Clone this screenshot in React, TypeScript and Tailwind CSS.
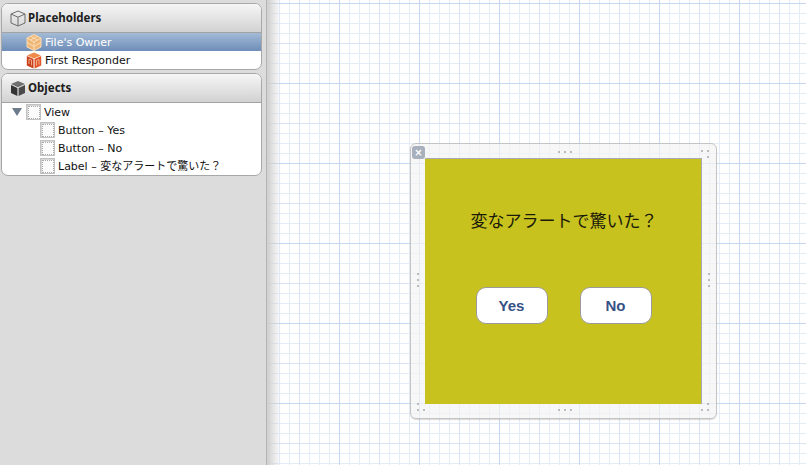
const uiFont = { fontFamily: '"DejaVu Sans", "Noto Sans CJK JP", sans-serif' };

// small cube in the panel headers
function HeaderCube({ filled }: { filled?: boolean }) {
  return (
    <svg width="16" height="17" viewBox="0 0 16 17" className="shrink-0">
      {filled ? (
        <>
          <path d="M8 1 L15 4 L8 7.2 L1 4 Z" fill="#6f6f6f" />
          <path d="M1 5 L7.4 8 V16 L1 13 Z" fill="#333" />
          <path d="M15 5 L8.6 8 V16 L15 13 Z" fill="#4a4a4a" />
        </>
      ) : (
        <path
          d="M8 1 L15 4 V13 L8 16 L1 13 V4 Z M1 4 L8 7.2 L15 4 M8 7.2 V16"
          fill="none"
          stroke="#6b6b6b"
          strokeWidth="1"
        />
      )}
    </svg>
  );
}

function OwnerCube() {
  return (
    <svg width="16" height="17" viewBox="0 0 16 17" className="shrink-0">
      <path d="M8 0.5 L15 4 V13 L8 16.5 L1 13 V4 Z" fill="#efb777" />
      <path
        d="M8 0.5 L15 4 V13 L8 16.5 L1 13 V4 Z M1 4 L8 8 L15 4 M8 8 V16.5 M4.5 2.2 L11.5 6 M11.5 2.2 L4.5 6 M1 8.5 L8 12.5 L15 8.5"
        fill="none"
        stroke="#f9dcb6"
        strokeWidth="1"
      />
    </svg>
  );
}

function ResponderCube() {
  return (
    <svg width="16" height="17" viewBox="0 0 16 17" className="shrink-0">
      <path d="M8 0.5 L15 3.5 L8 6.5 L1 3.5 Z" fill="#f08a4a" />
      <path d="M0.8 4 L7.5 7 V16.5 L0.8 13.5 Z" fill="#c8401c" />
      <path d="M15.2 4 L8.5 7 V16.5 L15.2 13.5 Z" fill="#e0562a" />
      <path d="M3 7 V12 M5.5 8 V13.5 M3 7 L5.5 8 M10.5 8.5 V13.5 M13 7.5 V12.5 M10.5 8.5 L13 7.5" fill="none" stroke="#f6c0a0" strokeWidth="0.8" />
    </svg>
  );
}

function ViewIcon() {
  return (
    <span className="flex h-[16px] w-[15px] shrink-0 items-center justify-center border border-[#c2c2c2] bg-[#d6d6d6]">
      <span className="h-[13px] w-[12px] border border-dotted border-[#a8a8a8] bg-[#fbfbfb]" />
    </span>
  );
}

function Dots({ className, vertical }: { className: string; vertical?: boolean }) {
  return (
    <div className={`absolute flex gap-[4px] ${vertical ? "flex-col" : ""} ${className}`}>
      <span className="size-[2px] rounded-full bg-[#a9a9a9]" />
      <span className="size-[2px] rounded-full bg-[#a9a9a9]" />
      <span className="size-[2px] rounded-full bg-[#a9a9a9]" />
    </div>
  );
}

function Corner({ className, flip }: { className: string; flip: string }) {
  return (
    <svg width="8" height="8" viewBox="0 0 8 8" className={`absolute ${flip} ${className}`}>
      <circle cx="1" cy="1" r="1" fill="#a9a9a9" />
      <circle cx="7" cy="1" r="1" fill="#a9a9a9" />
      <circle cx="7" cy="7" r="1" fill="#a9a9a9" />
    </svg>
  );
}

function PanelHeader({ title, filled }: { title: string; filled?: boolean }) {
  return (
    <div className="flex h-[29px] items-center gap-[2px] border-b border-[#a3a3a3] bg-gradient-to-b from-[#f6f6f6] to-[#d2d2d2] pl-[8px]">
      <HeaderCube filled={filled} />
      <span
        className="text-[11.5px] font-bold text-[#1c1c1c]"
        style={{ fontFamily: '"Noto Sans", sans-serif' }}
      >
        {title}
      </span>
    </div>
  );
}

function Row({
  children,
  label,
  indent,
  selected,
}: {
  children: React.ReactNode;
  label: string;
  indent: string;
  selected?: boolean;
}) {
  return (
    <div
      className={`flex h-[18px] items-center gap-[3px] text-[11px] ${indent} ${
        selected
          ? "bg-gradient-to-b from-[#a3bbd6] to-[#6e8db8] text-white"
          : "text-[#111]"
      }`}
    >
      {children}
      <span className="whitespace-nowrap pt-[2px]">{label}</span>
    </div>
  );
}

export default function App() {
  return (
    <div className="flex h-[465px] w-[806px] overflow-hidden" style={uiFont}>
      {/* left outline */}
      <aside className="flex w-[267px] shrink-0 flex-col gap-[3px] border-r-[1px] border-[#b4b4b4] bg-[#dcdcdc] pl-[1px] pr-[4px] pt-[3px]">
        <section className="overflow-hidden rounded-[7px] border border-[#a8a8a8] bg-white">
          <PanelHeader title="Placeholders" />
          <Row label="File's Owner" indent="pl-[24px]" selected>
            <OwnerCube />
          </Row>
          <Row label="First Responder" indent="pl-[24px]">
            <ResponderCube />
          </Row>
        </section>

        <section className="overflow-hidden rounded-[7px] border border-[#a8a8a8] bg-white">
          <PanelHeader title="Objects" filled />
          <div className="flex h-[18px] items-center text-[11px] text-[#111]">
            <span className="ml-[10px] mr-[4px] h-0 w-0 border-x-[5px] border-t-[8px] border-x-transparent border-t-[#6c7a8a]" />
            <ViewIcon />
            <span className="ml-[3px] pt-[2px]">View</span>
          </div>
          <Row label="Button – Yes" indent="pl-[38px]">
            <ViewIcon />
          </Row>
          <Row label="Button – No" indent="pl-[38px]">
            <ViewIcon />
          </Row>
          <Row label="Label – 変なアラートで驚いた？" indent="pl-[38px]">
            <ViewIcon />
          </Row>
        </section>
      </aside>

      {/* canvas */}
      <main className="relative flex-1 bg-white bg-[linear-gradient(to_right,#c6d8f0_1px,transparent_1px),linear-gradient(to_bottom,#c6d8f0_1px,transparent_1px),linear-gradient(to_right,#d8e4f5_1px,transparent_1px),linear-gradient(to_bottom,#d8e4f5_1px,transparent_1px),linear-gradient(to_right,#e4ecf8_1px,transparent_1px),linear-gradient(to_bottom,#e4ecf8_1px,transparent_1px)] bg-[size:80px_80px,80px_80px,40px_40px,40px_40px,10px_10px,10px_10px] bg-[position:72px_3px,72px_3px,32px_3px,32px_3px,2px_3px,2px_3px]">
        <div className="pointer-events-none absolute inset-y-0 left-0 w-[14px] bg-gradient-to-r from-[#cfcfcf] to-transparent" />

        {/* view frame */}
        <div className="absolute left-[143px] top-[143px] h-[276px] w-[307px] rounded-[6px] border border-[#c4c4c4] bg-[#f3f3f3]/70 shadow-[0_1px_1px_rgba(0,0,0,0.15)]">
          <span className="absolute left-[1px] top-[2px] flex size-[13px] items-center justify-center rounded-[3px] bg-[#a8b0bd] text-[10px] font-bold leading-none text-white">
            ×
          </span>
          <Dots className="left-[147px] top-[7px]" />
          <Dots className="left-[147px] bottom-[7px]" />
          <Dots className="left-[6px] top-[129px]" vertical />
          <Dots className="right-[6px] top-[129px]" vertical />
          <Corner className="right-[7px] top-[6px]" flip="" />
          <Corner className="bottom-[7px] left-[6px]" flip="rotate-180" />
          <Corner className="bottom-[7px] right-[7px]" flip="-scale-y-100" />

          <div className="absolute left-[14px] top-[14px] flex h-[246px] w-[277px] flex-col items-center border-r border-t border-[#a9a9b4] bg-[#c8c21f]">
            <p
              className="ml-[2px] mt-[51px] text-[17px] leading-[24px] text-[#1a1a0a]"
              style={{ fontFamily: '"Liberation Sans", "Noto Sans CJK JP", sans-serif' }}
            >
              変なアラートで驚いた？
            </p>
            <div className="ml-[2px] mt-[53px] flex gap-[32px]">
              {["Yes", "No"].map((t) => (
                <button
                  key={t}
                  className="h-[37px] w-[72px] rounded-[10px] border border-[#9a9a9a] bg-white pt-[1px] pr-[1px] text-[15px] font-bold text-[#375287]"
                  style={{ fontFamily: '"Liberation Sans", sans-serif' }}
                >
                  {t}
                </button>
              ))}
            </div>
          </div>
        </div>
      </main>
    </div>
  );
}
